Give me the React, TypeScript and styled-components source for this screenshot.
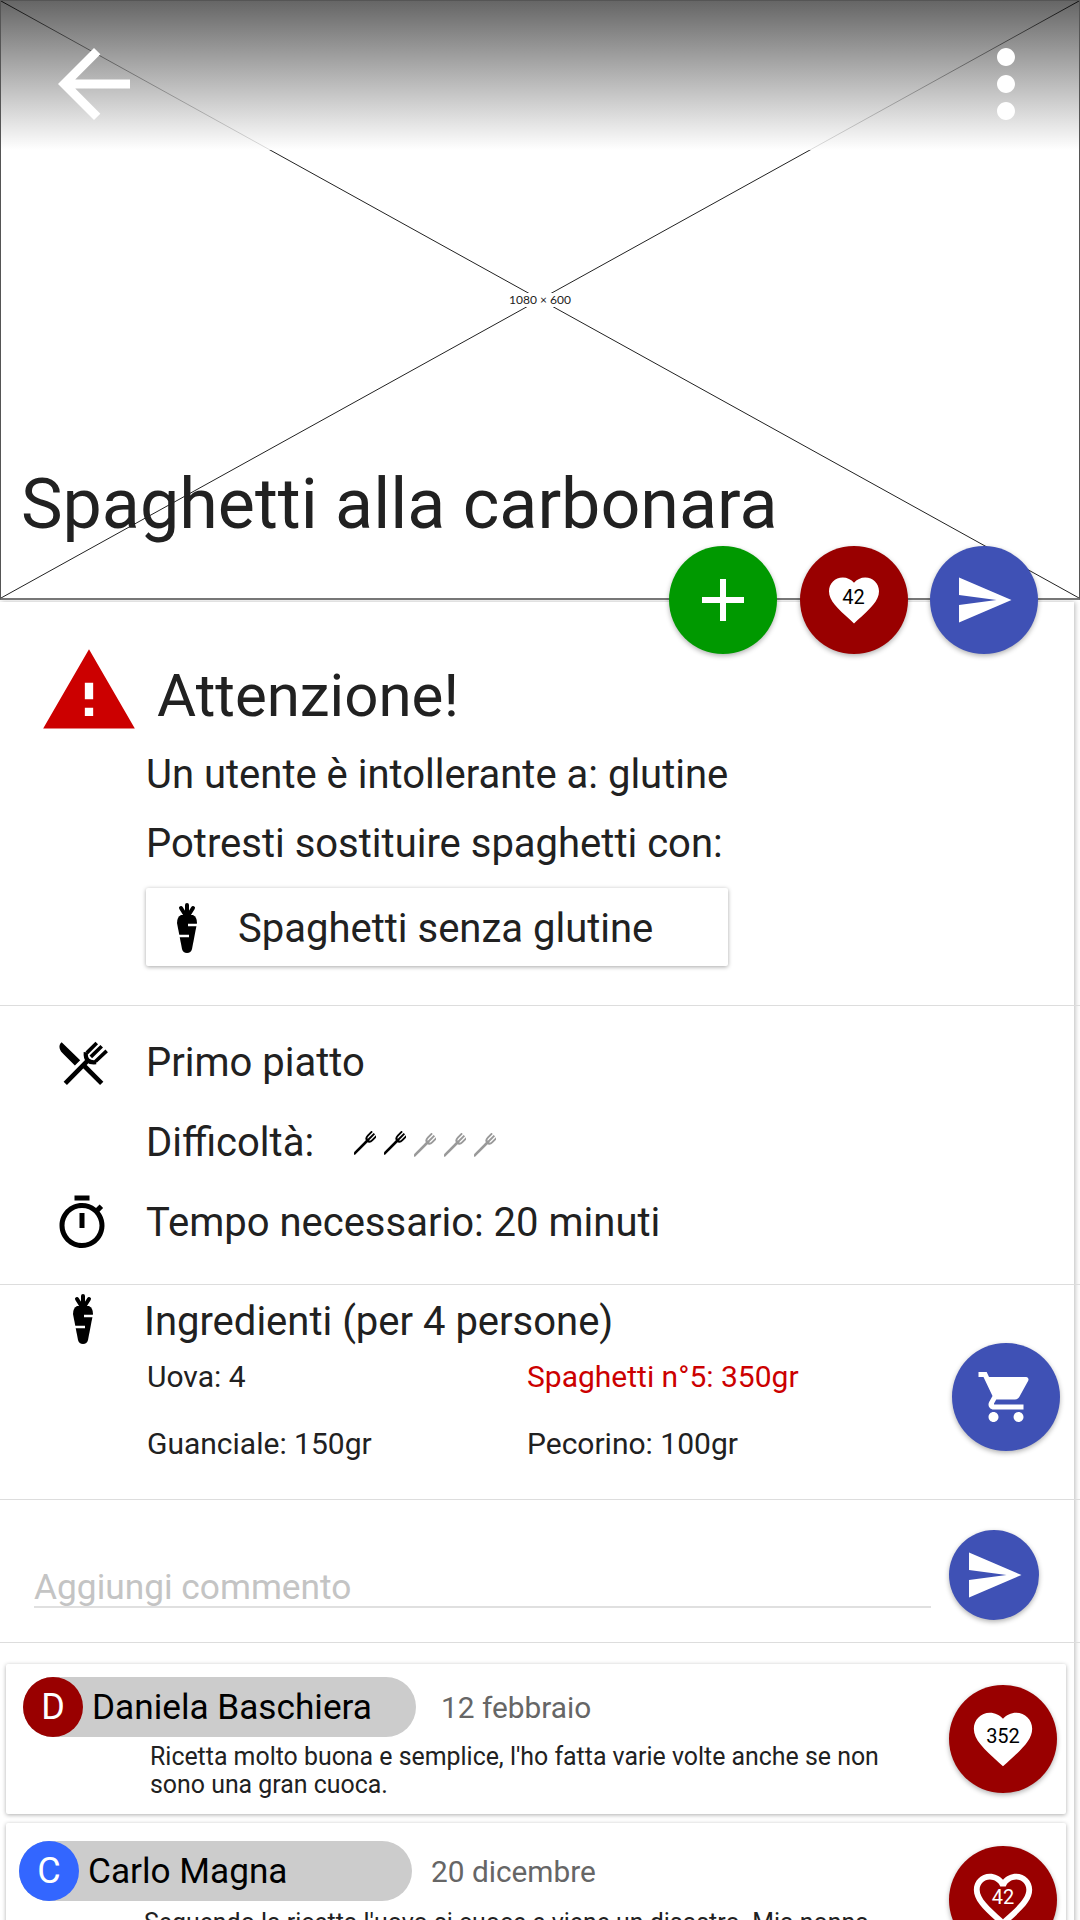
import { FC } from 'react';
import styled, { createGlobalStyle } from 'styled-components';
import {
  MdAdd,
  MdArrowBack,
  MdFavorite,
  MdFavoriteBorder,
  MdMoreVert,
  MdOutlineTimer,
  MdSend,
  MdShoppingCart,
  MdWarning
} from 'react-icons/md';

const GlobalStyle = createGlobalStyle`
  html, body {
    margin: 0;
    padding: 0;
    background: #fff;
    font-family: Roboto, "Liberation Sans", sans-serif;
    color: #212121;
  }
  * {
    box-sizing: border-box;
  }
`;

const Page = styled.div`
  width: 1080px;
  height: 1920px;
  overflow: hidden;
`;

const Hero = styled.header`
  position: relative;
  height: 600px;
  display: flex;
  flex-direction: column;
  justify-content: space-between;
  border: 1px solid #555;
  border-bottom: 2px solid #777;
  background: #fff;
`;

const Placeholder = styled.svg`
  position: absolute;
  inset: 0;
  width: 100%;
  height: 100%;
`;

const PlaceholderLabel = styled.span`
  position: absolute;
  top: 292px;
  left: 508px;
  width: 62px;
  height: 14px;
  background: #fff;
  font-family: Lato, sans-serif;
  font-size: 12px;
  line-height: 14px;
  text-align: center;
  color: #222;
  white-space: nowrap;
`;

const Toolbar = styled.div`
  position: relative;
  height: 149px;
  padding: 29px 19px 0 39px;
  display: flex;
  justify-content: space-between;
  align-items: flex-start;
  color: #fff;
  background: linear-gradient(rgba(0, 0, 0, 0.6), rgba(255, 255, 255, 0.85));
  font-size: 108px;
  line-height: 0;
`;

const Title = styled.h1`
  position: relative;
  margin: 0 0 54px 20px;
  font-size: 70px;
  font-weight: 400;
  line-height: 80px;
  color: #212121;
`;

const FabRow = styled.div`
  position: absolute;
  top: 545px;
  right: 41px;
  display: flex;
  gap: 22.5px;
`;

const Fab = styled.button<{ $color: string; $size?: number; $iconSize?: number; $top?: number }>`
  flex: none;
  width: ${(p) => p.$size ?? 108}px;
  height: ${(p) => p.$size ?? 108}px;
  margin-top: ${(p) => p.$top ?? 0}px;
  padding: 0;
  border: 0;
  border-radius: 50%;
  display: grid;
  place-items: center;
  color: #fff;
  background: ${(p) => p.$color};
  box-shadow: 0 2px 5px rgba(0, 0, 0, 0.3);
  font-size: ${(p) => p.$iconSize ?? 60}px;
  font-family: inherit;
  line-height: 0;
  > * {
    grid-area: 1 / 1;
  }
`;

const HeartCount = styled.span<{ $light?: boolean }>`
  font-size: 20px;
  line-height: 20px;
  margin-bottom: 7px;
  color: ${(p) => (p.$light ? '#fff' : '#000')};
`;

const Panel = styled.main`
  width: 1074px;
  margin-top: 2px;
  background: #fff;
  box-shadow: 1px 0 5px rgba(0, 0, 0, 0.28);
`;

const Section = styled.section`
  margin-right: -6px;
  border-bottom: 1px solid #ddd;
`;

const AlertSection = styled(Section)`
  padding: 39px 0 39px;
`;

const AlertHead = styled.div`
  height: 99px;
  padding-left: 39px;
  display: flex;
  align-items: flex-start;
  gap: 18px;
  font-size: 100px;
  line-height: 0;
  color: #c00;
`;

const AlertTitle = styled.h2`
  margin: 5px 0 0;
  font-size: 60px;
  font-weight: 400;
  line-height: 100px;
  color: #212121;
`;

const AlertBody = styled.div`
  padding-left: 146px;
`;

const Line = styled.p`
  margin: 0;
  font-size: 40px;
  line-height: 69px;
`;

const SubstituteCard = styled.div`
  width: 582px;
  height: 78px;
  margin-top: 10px;
  padding: 2px 0 0 31px;
  display: flex;
  align-items: center;
  gap: 41px;
  font-size: 40px;
  border-radius: 2px;
  box-shadow: 0 1px 4px rgba(0, 0, 0, 0.35);
`;

const InfoSection = styled(Section)`
  padding: 17px 0 21px;
`;

const InfoRow = styled.div`
  height: 80px;
  display: flex;
  align-items: center;
`;

const InfoIcon = styled.div`
  flex: none;
  width: 146px;
  padding-left: 52px;
  display: flex;
  font-size: 60px;
  line-height: 0;
  color: #000;
`;

const CutleryIcon = styled.svg`
  margin-left: 5px;
  width: 53px;
  height: 47px;
`;

const InfoText = styled.span`
  font-size: 40px;
  line-height: 80px;
`;

const ForkRating = styled.span`
  display: flex;
  gap: 8px;
  margin-left: 40px;
  margin-top: 2px;
`;

const Fork = styled.svg<{ $off?: boolean }>`
  width: 22px;
  height: 24px;
  color: ${(p) => (p.$off ? '#999' : '#000')};
  margin-top: ${(p) => (p.$off ? 2 : 0)}px;
`;

const IngredientsSection = styled(Section)`
  height: 215px;
  padding: 9px 20px 0 0;
  display: flex;
`;

const IngredientsBody = styled.div`
  flex: 1;
`;

const IngredientsHead = styled.div`
  display: flex;
  align-items: flex-start;
`;

const CarrotSlot = styled.div`
  flex: none;
  width: 144px;
  padding-left: 73px;
  display: flex;
`;

const Carrot = styled.svg`
  flex: none;
  width: 20px;
  height: 50px;
`;

const IngredientsTitle = styled.h3`
  margin: 2px 0 -1px;
  font-size: 40px;
  font-weight: 400;
  line-height: 52px;
`;

const IngredientGrid = styled.ul`
  margin: 0;
  padding: 0 0 0 147px;
  list-style: none;
  display: grid;
  grid-template-columns: 380px 1fr;
  row-gap: 7px;
`;

const Ingredient = styled.li<{ $missing?: boolean }>`
  font-size: 30px;
  line-height: 60px;
  color: ${(p) => (p.$missing ? '#c00' : '#212121')};
`;

const CommentForm = styled(Section)`
  height: 143px;
  padding: 30px 41px 0 34px;
  display: flex;
  align-items: flex-start;
  gap: 18px;
`;

const CommentInput = styled.input`
  flex: 1;
  min-width: 0;
  height: 43px;
  margin-top: 35px;
  padding: 2px 0 0;
  border: 0;
  border-bottom: 2px solid #e0e0e0;
  outline: none;
  background: none;
  font-family: inherit;
  font-size: 35.3px;
  &::placeholder {
    color: #c4c4c4;
    opacity: 1;
  }
`;

const CommentList = styled.div`
  padding: 21px 8px 0 6px;
  display: flex;
  flex-direction: column;
  gap: 9px;
`;

const CommentCard = styled.article<{ $top: number; $left: number }>`
  padding: ${(p) => p.$top}px 9px 0 ${(p) => p.$left}px;
  height: 150px;
  display: flex;
  justify-content: space-between;
  align-items: flex-start;
  border-radius: 2px;
  box-shadow: 0 1px 4px rgba(0, 0, 0, 0.32);
`;

const CommentMain = styled.div`
  width: 900px;
`;

const CommentHead = styled.div<{ $gap: number }>`
  display: flex;
  align-items: center;
  gap: ${(p) => p.$gap}px;
`;

const Chip = styled.div`
  flex: none;
  width: 393px;
  height: 60px;
  display: flex;
  align-items: center;
  gap: 9px;
  border-radius: 30px;
  background: #ccc;
  font-size: 35.2px;
  color: #000;
`;

const Avatar = styled.span<{ $color: string }>`
  flex: none;
  width: 60px;
  height: 60px;
  border-radius: 50%;
  display: grid;
  place-items: center;
  background: ${(p) => p.$color};
  color: #fff;
  font-size: 36px;
`;

const CommentDate = styled.span`
  font-size: 29.8px;
  color: #666;
`;

const CommentText = styled.p<{ $top: number; $left: number }>`
  margin: ${(p) => p.$top}px 0 0 ${(p) => p.$left}px;
  font-size: 24.9px;
  line-height: 28px;
  color: #212121;
`;

const CarrotIcon: FC = () => (
  <Carrot viewBox="0 0 20 50">
    <g stroke="#000" strokeWidth="4" strokeLinecap="round" fill="none">
      <path d="M10 2v10M4 5l5 8M16 5l-5 8" />
    </g>
    <path d="M4 12h12q4 2 4 8l-5 26q-1 4-5 4t-5-4L0 20q0-6 4-8z" fill="#000" />
    <path d="M11 22h9M0 33h12" stroke="#fff" strokeWidth="2.5" />
  </Carrot>
);

const ForkIcon: FC<{ off?: boolean }> = ({ off }) => (
  <Fork $off={off} viewBox="0 0 22 24">
    <g transform="rotate(45 14 9)" stroke="currentColor" fill="none">
      <path d="M14 8v21" strokeWidth="2.6" />
      <path d="M10.8 0v6q0 4 3.2 4t3.2-4V0M14 0v9" strokeWidth="1.9" />
    </g>
  </Fork>
);

const App: FC = () => {
  return (
    <Page>
      <GlobalStyle />
      <Hero>
        <Placeholder viewBox="0 0 1078 597" preserveAspectRatio="none">
          <path d="M0 0L1078 597M1078 0L0 597" stroke="#222" strokeWidth="1" fill="none" />
        </Placeholder>
        <PlaceholderLabel>1080 × 600</PlaceholderLabel>
        <Toolbar>
          <MdArrowBack />
          <MdMoreVert />
        </Toolbar>
        <Title>Spaghetti alla carbonara</Title>
        <FabRow>
          <Fab $color="#090" $iconSize={72}>
            <MdAdd />
          </Fab>
          <Fab $color="#900">
            <MdFavorite />
            <HeartCount>42</HeartCount>
          </Fab>
          <Fab $color="#3f51b5">
            <MdSend />
          </Fab>
        </FabRow>
      </Hero>
      <Panel>
        <AlertSection>
          <AlertHead>
            <MdWarning />
            <AlertTitle>Attenzione!</AlertTitle>
          </AlertHead>
          <AlertBody>
            <Line>Un utente è intollerante a: glutine</Line>
            <Line>Potresti sostituire spaghetti con:</Line>
            <SubstituteCard>
              <CarrotIcon />
              Spaghetti senza glutine
            </SubstituteCard>
          </AlertBody>
        </AlertSection>
        <InfoSection>
          <InfoRow>
            <InfoIcon>
              <CutleryIcon viewBox="50 30 160 140">
                <path d="M64 36C52 46 58 62 70 72L104 106L120 90Z" fill="#000" />
                <g stroke="#000" fill="none">
                  <path d="M75 160L142 92M185 160L128 103" strokeWidth="14" />
                  <path d="M140 68L170 38M152 80L185 48M166 94L200 62" strokeWidth="11" />
                  <path d="M137 66Q134 100 168 96" strokeWidth="13" />
                </g>
              </CutleryIcon>
            </InfoIcon>
            <InfoText>Primo piatto</InfoText>
          </InfoRow>
          <InfoRow>
            <InfoIcon />
            <InfoText>Difficoltà:</InfoText>
            <ForkRating>
              <ForkIcon />
              <ForkIcon />
              <ForkIcon off />
              <ForkIcon off />
              <ForkIcon off />
            </ForkRating>
          </InfoRow>
          <InfoRow>
            <InfoIcon>
              <MdOutlineTimer />
            </InfoIcon>
            <InfoText>Tempo necessario: 20 minuti</InfoText>
          </InfoRow>
        </InfoSection>
        <IngredientsSection>
          <IngredientsBody>
            <IngredientsHead>
              <CarrotSlot>
                <CarrotIcon />
              </CarrotSlot>
              <IngredientsTitle>Ingredienti (per 4 persone)</IngredientsTitle>
            </IngredientsHead>
            <IngredientGrid>
              <Ingredient>Uova: 4</Ingredient>
              <Ingredient $missing>Spaghetti n°5: 350gr</Ingredient>
              <Ingredient>Guanciale: 150gr</Ingredient>
              <Ingredient>Pecorino: 100gr</Ingredient>
            </IngredientGrid>
          </IngredientsBody>
          <Fab $color="#3f51b5" $top={49}>
            <MdShoppingCart />
          </Fab>
        </IngredientsSection>
        <CommentForm>
          <CommentInput placeholder="Aggiungi commento" />
          <Fab $color="#3f51b5" $size={90}>
            <MdSend />
          </Fab>
        </CommentForm>
        <CommentList>
          <CommentCard $top={13} $left={17}>
            <CommentMain>
              <CommentHead $gap={25}>
                <Chip>
                  <Avatar $color="#900">D</Avatar>
                  Daniela Baschiera
                </Chip>
                <CommentDate>12 febbraio</CommentDate>
              </CommentHead>
              <CommentText $top={6} $left={127}>
                Ricetta molto buona e semplice, l'ho fatta varie volte anche se non sono una gran
                cuoca.
              </CommentText>
            </CommentMain>
            <Fab $color="#900" $iconSize={70} $top={8}>
              <MdFavorite />
              <HeartCount>352</HeartCount>
            </Fab>
          </CommentCard>
          <CommentCard $top={18} $left={13}>
            <CommentMain>
              <CommentHead $gap={19}>
                <Chip>
                  <Avatar $color="#36f">C</Avatar>
                  Carlo Magna
                </Chip>
                <CommentDate>20 dicembre</CommentDate>
              </CommentHead>
              <CommentText $top={8} $left={125}>
                Seguendo la ricetta l'uovo si cuoce e viene un disastro. Mia nonna
              </CommentText>
            </CommentMain>
            <Fab $color="#900" $iconSize={70} $top={5}>
              <MdFavoriteBorder />
              <HeartCount $light>42</HeartCount>
            </Fab>
          </CommentCard>
        </CommentList>
      </Panel>
    </Page>
  );
};

export default App;
